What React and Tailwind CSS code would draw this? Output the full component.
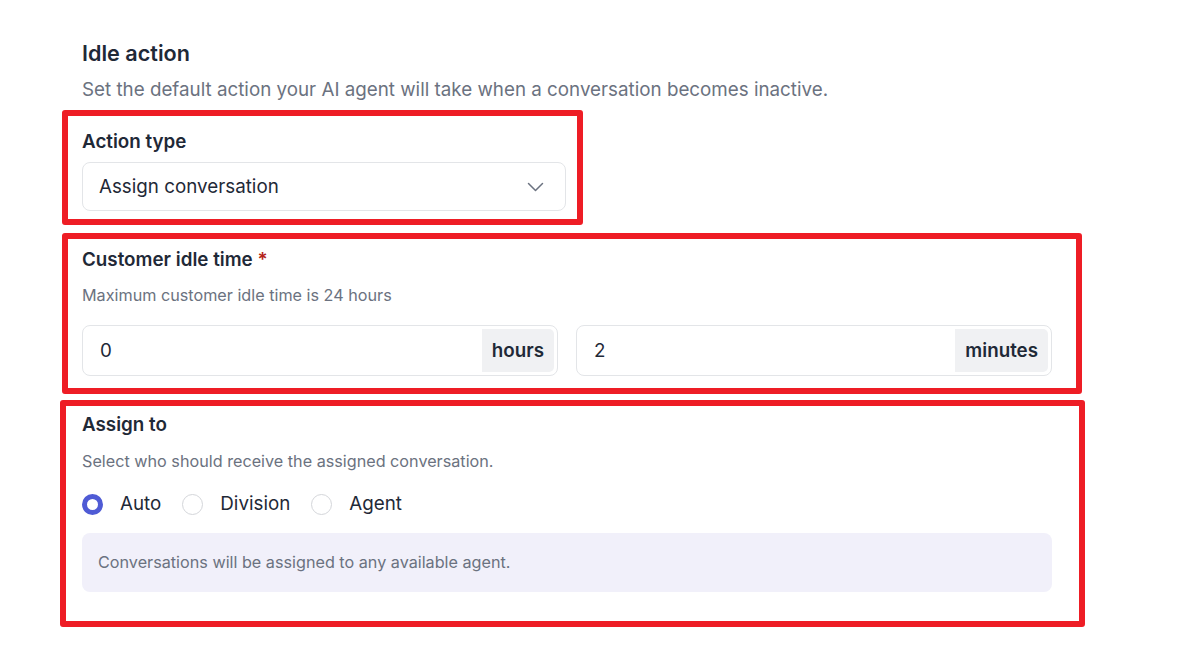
import { useState } from "react";

const RED = "border-[6px] border-[#ee1d25] rounded-[3px]";

function Radio({ label, checked, onClick }) {
  return (
    <button type="button" onClick={onClick} className="flex items-center gap-[17px]">
      <span
        className={
          checked
            ? "w-[21px] h-[21px] rounded-full border-[5px] border-[#4f5bd5] bg-white"
            : "w-[21px] h-[21px] rounded-full border border-[#d4d6da] bg-white"
        }
      />
      <span className="text-[18.8px] leading-[26px] text-[#1f2937]">{label}</span>
    </button>
  );
}

function TimeInput({ value, unit }) {
  return (
    <div className="flex-1 h-[51px] flex items-stretch border border-[#e3e5e8] rounded-[8px] p-[3px] bg-white">
      <div className="flex-1 flex items-center pl-[14px] pt-[1px] text-[18.8px] text-[#1f2937]">{value}</div>
      <div className="flex items-center px-[10px] pt-[1px] bg-[#f0f1f3] rounded-r-[5px] text-[18.8px] font-semibold text-[#1f2937]">
        {unit}
      </div>
    </div>
  );
}

export default function App() {
  const [target, setTarget] = useState("auto");

  return (
    <div
      className="min-h-screen bg-white pl-[62px] pt-[39px]"
      style={{ fontFamily: "Inter, 'Noto Sans', sans-serif" }}
    >
      <div className="pl-[20px]">
        <h2 className="text-[21.6px] leading-[28px] font-semibold text-[#1f2937]">Idle action</h2>
        <p className="mt-[10px] text-[18.8px] leading-[26px] text-[#6b7280]">
          Set the default action your AI agent will take when a conversation becomes inactive.
        </p>
      </div>

      <div className={`mt-[7px] w-[521px] ${RED} pt-[13px] pb-[8px] pl-[14px] pr-[11px]`}>
        <div className="text-[18.8px] leading-[26px] font-semibold text-[#1f2937]">Action type</div>
        <div className="mt-[7px] h-[49px] flex items-center justify-between border border-[#e3e5e8] rounded-[8px] pl-[16px] pr-[21px]">
          <span className="pt-[1px] text-[18.8px] text-[#1f2937]">Assign conversation</span>
          <svg width="17" height="10" viewBox="0 0 17 10" fill="none">
            <path d="M1.5 1.5L8.5 8.5L15.5 1.5" stroke="#6b7280" strokeWidth="1.5" strokeLinecap="round" strokeLinejoin="round" />
          </svg>
        </div>
      </div>

      <div className={`mt-[8px] w-[1020px] ${RED} pt-[8px] pb-[12px] pl-[14px] pr-[24px]`}>
        <div className="text-[18.8px] leading-[26px] font-semibold text-[#1f2937]">
          Customer idle time <span className="text-[#b42318]">*</span>
        </div>
        <div className="mt-[11px] text-[16.2px] leading-[22px] text-[#6b7280]">
          Maximum customer idle time is 24 hours
        </div>
        <div className="mt-[19px] flex gap-[18px]">
          <TimeInput value="0" unit="hours" />
          <TimeInput value="2" unit="minutes" />
        </div>
      </div>

      <div className={`mt-[6px] -ml-[2px] w-[1025px] ${RED} pt-[6px] pb-[29px] pl-[16px] pr-[27px]`}>
        <div className="text-[18.8px] leading-[26px] font-semibold text-[#1f2937]">Assign to</div>
        <div className="mt-[12px] text-[16.2px] leading-[22px] text-[#6b7280]">
          Select who should receive the assigned conversation.
        </div>
        <div className="mt-[19px] flex items-center gap-[21px]">
          <Radio label="Auto" checked={target === "auto"} onClick={() => setTarget("auto")} />
          <Radio label="Division" checked={target === "division"} onClick={() => setTarget("division")} />
          <Radio label="Agent" checked={target === "agent"} onClick={() => setTarget("agent")} />
        </div>
        <div className="mt-[16px] h-[59px] flex items-center pl-[16px] bg-[#f1f0fa] rounded-[8px] text-[16.2px] text-[#6b7280]">
          Conversations will be assigned to any available agent.
        </div>
      </div>
    </div>
  );
}
